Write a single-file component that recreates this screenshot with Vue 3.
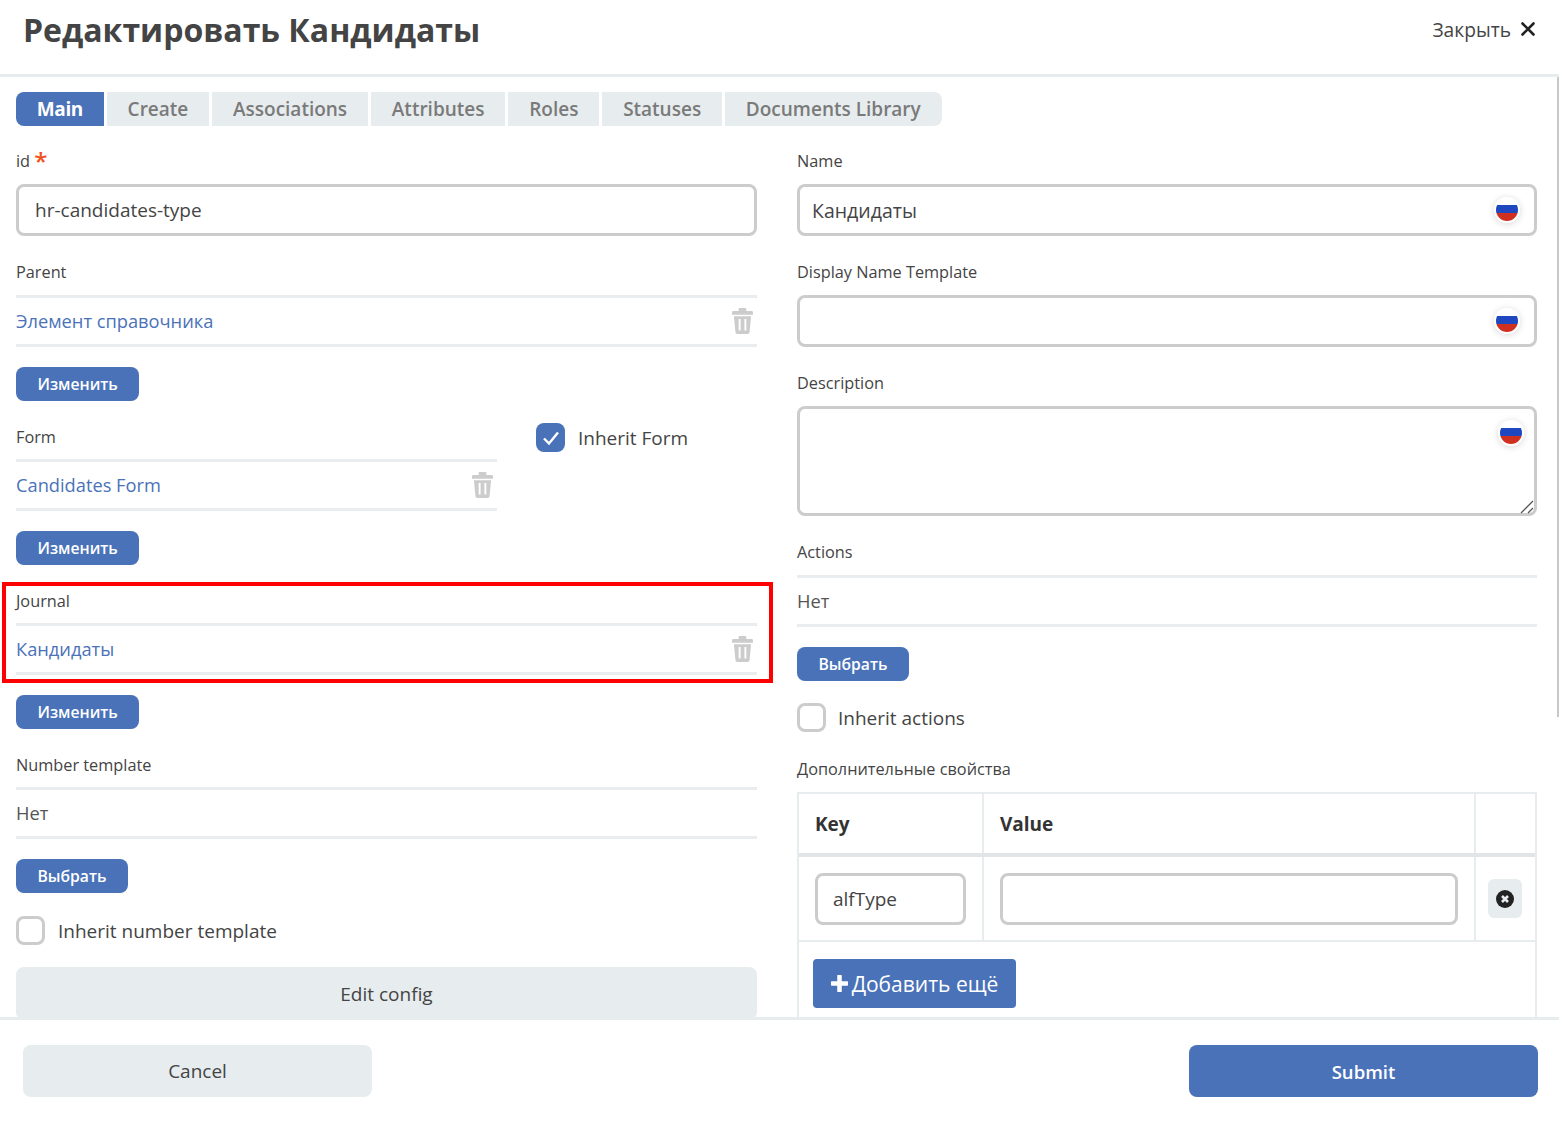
<script setup>
const tabs = ['Main', 'Create', 'Associations', 'Attributes', 'Roles', 'Statuses', 'Documents Library']
</script>

<template>
  <div class="modal">
    <header class="head">
      <h1>Редактировать Кандидаты</h1>
      <div class="close">
        <span>Закрыть</span>
        <svg width="14" height="14" viewBox="0 0 14 14"><path d="M1.5 1.5l11 11M12.5 1.5l-11 11" stroke="#222" stroke-width="2.6" stroke-linecap="round" /></svg>
      </div>
    </header>

    <div class="body">
      <div class="scrollbar"></div>
      <nav class="tabs">
        <div v-for="(tab, i) in tabs" :key="tab" class="tab" :class="{ active: i === 0 }">{{ tab }}</div>
      </nav>

      <div class="columns">
        <div class="col">
          <div class="group">
            <label>id <em>*</em></label>
            <input class="input" value="hr-candidates-type" />
          </div>

          <div class="group picker">
            <label>Parent</label>
            <div class="selected">
              <a>Элемент справочника</a>
              <svg class="trash" viewBox="0 0 22 27"><path d="M8 0h6a1 1 0 0 1 1 1v2h5.500a1.500 1.500 0 0 1 1.500 1.500V7H0V4.500A1.500 1.500 0 0 1 1.500 3H7V1a1 1 0 0 1 1-1zM2 8.500h18l-1.600 16.500a2 2 0 0 1-2 2H5.600a2 2 0 0 1-2-2zM7 11.500v12h2v-12zM13 11.500v12h2v-12z" fill-rule="evenodd" /></svg>
            </div>
            <button class="btn">Изменить</button>
          </div>

          <div class="form-row">
            <div class="group picker grow">
              <label class="low">Form</label>
              <div class="selected">
                <a>Candidates Form</a>
                <svg class="trash" viewBox="0 0 22 27"><path d="M8 0h6a1 1 0 0 1 1 1v2h5.500a1.500 1.500 0 0 1 1.500 1.500V7H0V4.500A1.500 1.500 0 0 1 1.500 3H7V1a1 1 0 0 1 1-1zM2 8.500h18l-1.600 16.500a2 2 0 0 1-2 2H5.600a2 2 0 0 1-2-2zM7 11.500v12h2v-12zM13 11.500v12h2v-12z" fill-rule="evenodd" /></svg>
              </div>
              <button class="btn">Изменить</button>
            </div>
            <div class="check inherit-form">
              <span class="box on">
                <svg width="18" height="16" viewBox="0 0 18 16"><path d="M2 8.500l5 5L16 2.500" fill="none" stroke="#fff" stroke-width="2.400" /></svg>
              </span>
              Inherit Form
            </div>
          </div>

          <div class="group picker">
            <div class="marked">
              <label class="low">Journal</label>
              <div class="selected">
                <a>Кандидаты</a>
                <svg class="trash" viewBox="0 0 22 27"><path d="M8 0h6a1 1 0 0 1 1 1v2h5.500a1.500 1.500 0 0 1 1.500 1.500V7H0V4.500A1.500 1.500 0 0 1 1.500 3H7V1a1 1 0 0 1 1-1zM2 8.500h18l-1.600 16.500a2 2 0 0 1-2 2H5.600a2 2 0 0 1-2-2zM7 11.500v12h2v-12zM13 11.500v12h2v-12z" fill-rule="evenodd" /></svg>
              </div>
            </div>
            <button class="btn">Изменить</button>
          </div>

          <div class="group tight">
            <label class="low">Number template</label>
            <div class="selected"><span>Нет</span></div>
            <button class="btn">Выбрать</button>
          </div>

          <div class="check spaced"><span class="box"></span>Inherit number template</div>

          <button class="wide">Edit config</button>
        </div>

        <div class="col">
          <div class="group">
            <label>Name</label>
            <div class="with-flag">
              <input class="input flagged" value="Кандидаты" />
              <span class="flag"></span>
            </div>
          </div>

          <div class="group">
            <label>Display Name Template</label>
            <div class="with-flag">
              <input class="input flagged" />
              <span class="flag"></span>
            </div>
          </div>

          <div class="group">
            <label>Description</label>
            <div class="with-flag">
              <textarea class="input area"></textarea>
              <span class="flag in-area"></span>
              <svg class="grip" width="14" height="14" viewBox="0 0 14 14"><path d="M1 13L13 1M8 13l5-5" stroke="#555" stroke-width="1.300" fill="none" /></svg>
            </div>
          </div>

          <div class="group picker">
            <label>Actions</label>
            <div class="selected"><span>Нет</span></div>
            <button class="btn">Выбрать</button>
          </div>

          <div class="check right-check"><span class="box"></span>Inherit actions</div>

          <label class="props-label">Дополнительные свойства</label>
          <div class="table">
            <div class="row head-row">
              <div class="cell key">Key</div>
              <div class="cell value">Value</div>
              <div class="cell action"></div>
            </div>
            <div class="row data-row">
              <div class="cell key"><input class="input small" value="alfType" /></div>
              <div class="cell value"><input class="input small" /></div>
              <div class="cell action">
                <span class="remove">
                  <svg width="18" height="18" viewBox="0 0 18 18">
                    <circle cx="9" cy="9" r="9" fill="#222" />
                    <path d="M6 6l6 6M12 6l-6 6" stroke="#e7ecef" stroke-width="2.600" />
                  </svg>
                </span>
              </div>
            </div>
            <div class="add-row">
              <button class="add">
                <svg width="17" height="17" viewBox="0 0 17 17"><path d="M8.500 1v15M1 8.500h15" stroke="#fff" stroke-width="4.500" stroke-linecap="round" /></svg>
                Добавить ещё
              </button>
            </div>
          </div>
        </div>
      </div>
    </div>

    <footer class="foot">
      <button class="foot-btn cancel">Cancel</button>
      <button class="foot-btn submit">Submit</button>
    </footer>
  </div>
</template>

<style scoped>
.modal {
  height: 1128px;
  display: flex;
  flex-direction: column;
  background: #fff;
  font-family: "Open Sans", sans-serif;
  color: #444;
  overflow: hidden;
}

.head {
  height: 74px;
  flex: none;
  display: flex;
  align-items: flex-start;
  justify-content: space-between;
  padding: 0 24px 0 23px;
  border-bottom: 3px solid #e7ecef;
  box-sizing: content-box;
}
.head h1 {
  margin: 8px 0 0;
  font-size: 32px;
  line-height: 44px;
  font-weight: 700;
  color: #444;
}
.close {
  display: flex;
  align-items: center;
  gap: 10px;
  height: 58px;
  font-size: 19.2px;
  color: #444;
}

.body {
  position: relative;
  flex: 1;
  min-height: 0;
  overflow: hidden;
  padding: 15px 22px 0 16px;
}
.scrollbar {
  position: absolute;
  top: 0;
  right: 0;
  width: 2px;
  height: 640px;
  background: #c8c8c8;
}

.tabs {
  display: flex;
  gap: 3px;
  margin-bottom: 24px;
}
.tab {
  height: 34px;
  line-height: 34px;
  padding: 0 20.85px;
  background: #e7ecef;
  color: #7a7a7a;
  font-size: 19px;
  font-weight: 600;
}
.tab:first-child {
  border-radius: 8px 0 0 8px;
}
.tab:last-child {
  border-radius: 0 8px 8px 0;
}
.tab.active {
  background: #4a72b8;
  color: #fff;
  font-weight: 700;
  letter-spacing: -0.4px;
}

.columns {
  display: grid;
  grid-template-columns: 741px 740px;
  column-gap: 40px;
}

.group {
  margin-bottom: 25px;
}
.group.picker {
  margin-bottom: 24px;
}
.group.tight {
  margin-bottom: 23px;
}
label {
  display: block;
  height: 22px;
  line-height: 22px;
  margin-bottom: 12px;
  font-size: 16.3px;
  font-weight: 500;
  color: #444;
}
label.low {
  height: 21px;
  padding-top: 1px;
}
label em {
  font-style: normal;
  font-size: 24px;
  font-weight: 600;
  line-height: 16px;
  color: #f0521e;
  vertical-align: -3px;
}

.input {
  display: block;
  width: 100%;
  height: 52px;
  box-sizing: border-box;
  padding: 0 16px;
  border: 3px solid #ccc;
  border-radius: 8px;
  outline: none;
  background: #fff;
  font-family: inherit;
  font-size: 19px;
  color: #444;
}
.with-flag {
  position: relative;
}
.flagged {
  padding: 0 60px 0 12px;
  font-size: 19.5px;
}
.area {
  height: 110px;
  resize: none;
  vertical-align: top;
}
.flag {
  position: absolute;
  top: 13px;
  right: 17px;
  width: 22px;
  height: 22px;
  border-radius: 50%;
  border: 2px solid #fff;
  box-shadow: 0 1px 7px rgba(0, 0, 0, 0.16);
  background: linear-gradient(#fff 0 26%, #1f47c0 26% 64%, #d03020 64%);
}
.flag.in-area {
  top: 14px;
  right: 13px;
}
.grip {
  position: absolute;
  right: 3px;
  bottom: 2px;
}

.selected {
  height: 52px;
  box-sizing: border-box;
  display: flex;
  align-items: center;
  justify-content: space-between;
  border-top: 3px solid #e9edf0;
  border-bottom: 3px solid #e9edf0;
  font-size: 18.25px;
  color: #555;
}
.selected a,
.selected span {
  margin-top: -2px;
}
.selected a {
  color: #4a72b8;
}
.trash {
  width: 21px;
  height: 26px;
  margin-right: 4px;
  fill: #ccc;
}

.btn {
  display: block;
  margin-top: 20px;
  height: 34px;
  padding: 0 21.5px;
  border: none;
  border-radius: 8px;
  background: #4a72b8;
  color: #fff;
  font-family: inherit;
  font-size: 15.7px;
  font-weight: 600;
}

.form-row {
  display: flex;
  gap: 39px;
}
.grow {
  width: 481px;
  flex: none;
}
.check {
  display: flex;
  align-items: center;
  gap: 13px;
  font-size: 19px;
  color: #444;
}
.inherit-form {
  height: 29px;
  margin-top: -2px;
}
.box {
  width: 29px;
  height: 29px;
  flex: none;
  box-sizing: border-box;
  display: flex;
  align-items: center;
  justify-content: center;
  border: 3px solid #ccc;
  border-radius: 8px;
}
.box.on {
  border: none;
  background: #4a72b8;
}
.spaced {
  margin-bottom: 22px;
}

.marked {
  position: relative;
}
.marked::after {
  content: "";
  position: absolute;
  top: -7px;
  bottom: -8px;
  left: -14px;
  right: -16px;
  border: 4px solid #ff0000;
  pointer-events: none;
}

.wide {
  display: block;
  width: 100%;
  height: 53px;
  border: none;
  border-radius: 8px;
  background: #e7ecef;
  font-family: inherit;
  font-size: 19px;
  color: #444;
}

.right-check {
  gap: 12px;
  margin-top: -2px;
  margin-bottom: 26px;
}
.props-label {
  margin-bottom: 12px;
}

.table {
  border: 2px solid #e7ecef;
  border-bottom: none;
}
.row {
  display: grid;
  grid-template-columns: 185px 492px 1fr;
}
.cell {
  box-sizing: border-box;
  display: flex;
  align-items: center;
  padding: 0 16px;
  border-right: 2px solid #e7ecef;
}
.cell.action {
  border-right: none;
  padding: 0 12px;
}
.head-row {
  height: 63px;
  border-bottom: 4px solid #e1e5e8;
  box-sizing: border-box;
}
.head-row .cell {
  font-size: 19px;
  font-weight: 700;
  color: #333;
}
.data-row {
  height: 85px;
  border-bottom: 2px solid #e7ecef;
  box-sizing: border-box;
}
.small {
  height: 52px;
  padding: 0 15px;
}
.remove {
  width: 34px;
  height: 39px;
  display: flex;
  align-items: center;
  justify-content: center;
  border-radius: 6px;
  background: #e7ecef;
}
.add-row {
  padding: 17px 14px 40px;
}
.add {
  display: flex;
  align-items: center;
  gap: 4px;
  height: 49px;
  width: 203px;
  justify-content: center;
  border: none;
  border-radius: 4px;
  background: #4a72b8;
  color: #fff;
  font-family: inherit;
  font-size: 21px;
}

.foot {
  flex: none;
  box-sizing: content-box;
  display: flex;
  align-items: flex-start;
  justify-content: space-between;
  padding: 25px 21px 0 23px;
  height: 83px;
  border-top: 3px solid #e7ecef;
  background: #fff;
}
.foot-btn {
  width: 349px;
  height: 52px;
  border: none;
  border-radius: 8px;
  font-family: inherit;
  font-size: 19px;
}
.cancel {
  background: #e7ecef;
  color: #444;
  font-weight: 500;
}
.submit {
  background: #4a72b8;
  color: #fff;
  font-size: 18.5px;
  font-weight: 600;
}
</style>

<style>
html, body {
  margin: 0;
  overflow: hidden;
  background: #fff;
}
</style>
